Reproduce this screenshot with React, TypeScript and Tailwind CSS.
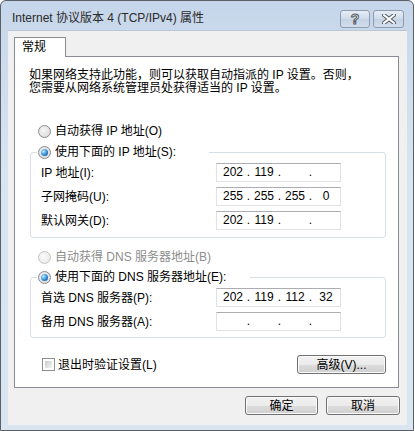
import React from 'react';

const FONT = "font-['Liberation_Sans','Noto_Sans_CJK_SC',sans-serif]";

function Radio({ checked = false, disabled = false }: { checked?: boolean; disabled?: boolean }) {
  return (
    <span
      className={`w-[13px] h-[13px] shrink-0 rounded-full border flex items-center justify-center ${
        disabled
          ? 'border-[#c3c3c3] bg-[radial-gradient(circle_at_40%_40%,#fafafa,#e6e6e6)]'
          : 'border-[#8a8b8c] bg-[radial-gradient(circle_at_40%_40%,#f6f6f6,#d4d4d4)]'
      }`}
    >
      {checked && (
        <span className="w-[7px] h-[7px] rounded-full bg-[radial-gradient(circle_at_35%_35%,#b8ecff,#2f8ad6_55%,#0d3b6e)]" />
      )}
    </span>
  );
}

function IpField({ parts }: { parts: string[] }) {
  return (
    <div className="w-[125px] h-[19px] bg-white border border-[#dfe3e8] border-t-[#abadb3] flex items-center pl-[3px] text-[12px] leading-[17px] text-black">
      {parts.map((p, i) => (
        <React.Fragment key={i}>
          <span className="w-[26px] text-center">{p}</span>
          {i < 3 && <span className="w-[5px] text-center">.</span>}
        </React.Fragment>
      ))}
    </div>
  );
}

function Row({ label, parts }: { label: string; parts: string[] }) {
  return (
    <div className="h-[19px] flex items-center justify-between pl-[10px] pr-[44px]">
      <span className="text-[12px] leading-[14px]">{label}</span>
      <IpField parts={parts} />
    </div>
  );
}

function WinButton({ children, className = '' }: { children: React.ReactNode; className?: string }) {
  return (
    <div
      className={`h-[19px] rounded-[3px] border border-[#707070] bg-[linear-gradient(#f2f2f2_0%,#ebebeb_50%,#dddddd_51%,#cfcfcf_100%)] flex items-center justify-center text-[12px] leading-[14px] text-black shadow-[inset_0_0_0_1px_#fbfbfb] ${className}`}
    >
      {children}
    </div>
  );
}

export default function App() {
  return (
    <div className={`w-[414px] h-[431px] ${FONT} bg-white`}>
      <div className="w-[414px] h-[431px] border border-[#5b5f66] rounded-t-[6px] bg-[linear-gradient(#c6d6ea,#d8e4f2_40%,#dae5f2)] flex flex-col">
        {/* title bar */}
        <div className="h-[29px] shrink-0 flex items-start">
          <div className="pl-[11px] pt-[9px] text-[12px] leading-[16px] text-[#2a2a2a] flex-1">
            Internet 协议版本 4 (TCP/IPv4) 属性
          </div>
          <div className="flex gap-[3px] pt-[9px] pr-[9px]">
            <div className="w-[30px] h-[18px] rounded-[3px] border border-[#8d9bb0] bg-[linear-gradient(#e6edf6,#cfdbea_50%,#c3d2e4_51%,#d3deec)] flex items-center justify-center">
              <span className="text-[14px] leading-[14px] font-bold text-white [-webkit-text-stroke:1px_#555b63]">?</span>
            </div>
            <div className="w-[31px] h-[18px] rounded-[3px] border border-[#8d9bb0] bg-[linear-gradient(#e6edf6,#cfdbea_50%,#c3d2e4_51%,#d3deec)] flex items-center justify-center">
              <svg width="14" height="10" viewBox="0 0 14 10">
                <path d="M2 1 L12 9 M12 1 L2 9" stroke="#555b63" strokeWidth="4" strokeLinecap="square" />
                <path d="M2 1 L12 9 M12 1 L2 9" stroke="#ffffff" strokeWidth="2" strokeLinecap="square" />
              </svg>
            </div>
          </div>
        </div>

        {/* client area */}
        <div className="ml-[7px] mr-[6px] h-[395px] shrink-0 bg-[#f0f0f0] border-t border-[#b9c6d6] flex flex-col">
          <div className="pl-[6px] pt-[6px] flex">
            <div className="relative z-10 -mb-[1px] w-[52px] h-[20px] bg-white border border-b-0 border-[#898c95] pl-[7px] text-[12px] leading-[18px] text-black">
              常规
            </div>
          </div>

          <div className="ml-[6px] mr-[8px] h-[332px] bg-white border border-[#898c95] flex flex-col text-black">
            <p className="mt-[12px] pl-[14px] h-[26px] text-[12px] leading-[13px]">
              如果网络支持此功能，则可以获取自动指派的 IP 设置。否则，
              <br />
              您需要从网络系统管理员处获得适当的 IP 设置。
            </p>

            <div className="mt-[28px] ml-[23px] h-[16px] flex items-center gap-[4px]">
              <Radio />
              <span className="text-[12px] leading-[14px]">自动获得 IP 地址(O)</span>
            </div>

            <fieldset className="mt-[5px] ml-[15px] mr-[12px] border border-[#d5dfe5] rounded-[3px] pb-[7px]">
              <legend className="ml-[6px] pl-[1px] w-[172px] h-[16px] flex items-center gap-[4px]">
                <Radio checked />
                <span className="text-[12px] leading-[14px]">使用下面的 IP 地址(S):</span>
              </legend>
              <div className="mt-[3px] flex flex-col gap-[5px]">
                <Row label="IP 地址(I):" parts={['202', '119', '', '']} />
                <Row label="子网掩码(U):" parts={['255', '255', '255', '0']} />
                <Row label="默认网关(D):" parts={['202', '119', '', '']} />
              </div>
            </fieldset>

            <div className="mt-[11px] ml-[23px] h-[16px] flex items-center gap-[4px]">
              <Radio disabled />
              <span className="text-[12px] leading-[14px] text-[#8d8d8d]">自动获得 DNS 服务器地址(B)</span>
            </div>

            <fieldset className="mt-[4px] ml-[15px] mr-[12px] border border-[#d5dfe5] rounded-[3px] pb-[6px]">
              <legend className="ml-[6px] pl-[1px] w-[213px] h-[16px] flex items-center gap-[4px]">
                <Radio checked />
                <span className="text-[12px] leading-[14px]">使用下面的 DNS 服务器地址(E):</span>
              </legend>
              <div className="mt-[3px] flex flex-col gap-[5px]">
                <Row label="首选 DNS 服务器(P):" parts={['202', '119', '112', '32']} />
                <Row label="备用 DNS 服务器(A):" parts={['', '', '', '']} />
              </div>
            </fieldset>

            <div className="mt-[17px] ml-[27px] mr-[12px] h-[19px] flex items-center justify-between">
              <div className="flex items-center gap-[3px]">
                <span className="w-[13px] h-[13px] border border-[#8e8f8f] bg-white p-[2px]">
                  <span className="block w-full h-full bg-[linear-gradient(135deg,#cbcbcb,#f4f4f4)]" />
                </span>
                <span className="text-[12px] leading-[14px]">退出时验证设置(L)</span>
              </div>
              <WinButton className="w-[89px]">高级(V)...</WinButton>
            </div>
          </div>

          <div className="mt-[8px] pr-[7px] flex justify-end gap-[8px]">
            <WinButton className="w-[73px]">确定</WinButton>
            <WinButton className="w-[74px]">取消</WinButton>
          </div>
        </div>
      </div>
    </div>
  );
}
